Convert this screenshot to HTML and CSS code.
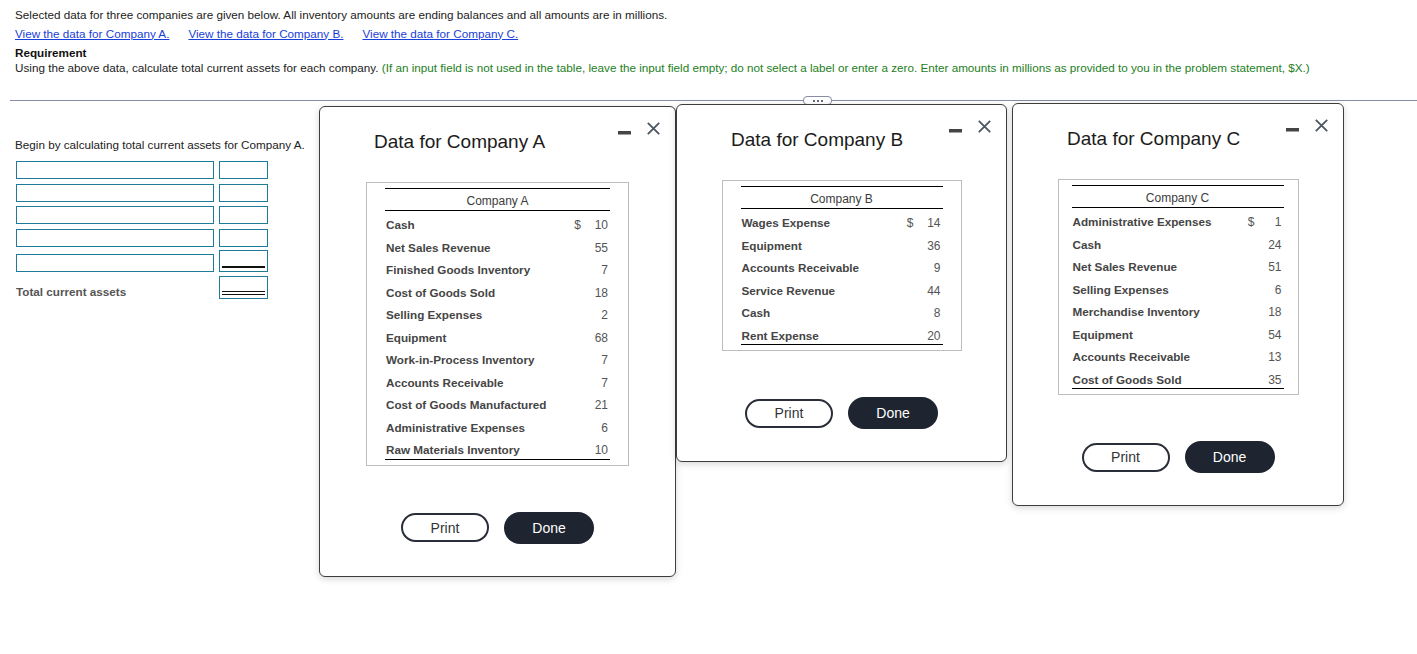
FILE: index.html
```html
<!DOCTYPE html>
<html lang="en">
<head>
<meta charset="utf-8">
<title>Total current assets</title>
<link rel="stylesheet" href="styles.css">
</head>
<body>
<div class="intro">
  <p class="line">Selected data for three companies are given below. All inventory amounts are ending balances and all amounts are in millions.</p>
  <p class="line links"><a href="#" class="link">View the data for Company A.</a><a href="#" class="link">View the data for Company B.</a><a href="#" class="link">View the data for Company C.</a></p>
  <p class="req-title">Requirement</p>
  <p class="req">Using the above data, calculate total current assets for each company. <span class="hint">(If an input field is not used in the table, leave the input field empty; do not select a label or enter a zero. Enter amounts in millions as provided to you in the problem statement, $X.)</span></p>
</div>

<div class="divider">
  <span class="rule rule-left"></span>
  <span class="pill"><i class="dot"></i><i class="dot"></i><i class="dot"></i></span>
  <span class="rule rule-right"></span>
</div>

<div class="work">
  <p class="work-lead">Begin by calculating total current assets for Company A.</p>
  <div class="entry">
    <div class="entry-row"><span class="field field-wide"></span><span class="field field-num"></span></div>
    <div class="entry-row"><span class="field field-wide"></span><span class="field field-num"></span></div>
    <div class="entry-row"><span class="field field-wide"></span><span class="field field-num"></span></div>
    <div class="entry-row"><span class="field field-wide"></span><span class="field field-num"></span></div>
    <div class="entry-row entry-row-last"><span class="field field-wide"></span><span class="field field-num field-sub"><i class="uline"></i></span></div>
    <div class="entry-row entry-row-total"><span class="total-label">Total current assets</span><span class="field field-num field-total"><i class="dline"></i></span></div>
  </div>
</div>

<section class="dialog dialog-a">
  <header class="dlg-head">
    <h2 class="dlg-title">Data for Company A</h2>
    <div class="dlg-controls">
      <svg class="ic" width="13" height="13" viewBox="0 0 13 13"><rect x="0" y="9" width="13" height="3.5" fill="#454545"/></svg>
      <svg class="ic" width="13" height="13" viewBox="0 0 13 13"><path d="M0.8 0.8 L12.2 12.2 M12.2 0.8 L0.8 12.2" stroke="#4d5561" stroke-width="1.8" fill="none"/></svg>
    </div>
  </header>
  <div class="data-box">
    <table class="data data-a">
      <colgroup><col><col class="c-cur"><col class="c-val"></colgroup>
      <thead><tr><th colspan="3">Company A</th></tr></thead>
      <tbody>
        <tr><td class="lbl">Cash</td><td class="cur">$</td><td class="val">10</td></tr>
        <tr><td class="lbl">Net Sales Revenue</td><td class="cur"></td><td class="val">55</td></tr>
        <tr><td class="lbl">Finished Goods Inventory</td><td class="cur"></td><td class="val">7</td></tr>
        <tr><td class="lbl">Cost of Goods Sold</td><td class="cur"></td><td class="val">18</td></tr>
        <tr><td class="lbl">Selling Expenses</td><td class="cur"></td><td class="val">2</td></tr>
        <tr><td class="lbl">Equipment</td><td class="cur"></td><td class="val">68</td></tr>
        <tr><td class="lbl">Work-in-Process Inventory</td><td class="cur"></td><td class="val">7</td></tr>
        <tr><td class="lbl">Accounts Receivable</td><td class="cur"></td><td class="val">7</td></tr>
        <tr><td class="lbl">Cost of Goods Manufactured</td><td class="cur"></td><td class="val">21</td></tr>
        <tr><td class="lbl">Administrative Expenses</td><td class="cur"></td><td class="val">6</td></tr>
        <tr class="last"><td class="lbl">Raw Materials Inventory</td><td class="cur"></td><td class="val">10</td></tr>
      </tbody>
    </table>
  </div>
  <div class="dlg-actions"><button class="btn btn-print">Print</button><button class="btn btn-done">Done</button></div>
</section>

<section class="dialog dialog-b">
  <header class="dlg-head">
    <h2 class="dlg-title">Data for Company B</h2>
    <div class="dlg-controls">
      <svg class="ic" width="13" height="13" viewBox="0 0 13 13"><rect x="0" y="9" width="13" height="3.5" fill="#454545"/></svg>
      <svg class="ic" width="13" height="13" viewBox="0 0 13 13"><path d="M0.8 0.8 L12.2 12.2 M12.2 0.8 L0.8 12.2" stroke="#4d5561" stroke-width="1.8" fill="none"/></svg>
    </div>
  </header>
  <div class="data-box">
    <table class="data data-b">
      <colgroup><col><col class="c-cur"><col class="c-val"></colgroup>
      <thead><tr><th colspan="3">Company B</th></tr></thead>
      <tbody>
        <tr><td class="lbl">Wages Expense</td><td class="cur">$</td><td class="val">14</td></tr>
        <tr><td class="lbl">Equipment</td><td class="cur"></td><td class="val">36</td></tr>
        <tr><td class="lbl">Accounts Receivable</td><td class="cur"></td><td class="val">9</td></tr>
        <tr><td class="lbl">Service Revenue</td><td class="cur"></td><td class="val">44</td></tr>
        <tr><td class="lbl">Cash</td><td class="cur"></td><td class="val">8</td></tr>
        <tr class="last"><td class="lbl">Rent Expense</td><td class="cur"></td><td class="val">20</td></tr>
      </tbody>
    </table>
  </div>
  <div class="dlg-actions"><button class="btn btn-print">Print</button><button class="btn btn-done">Done</button></div>
</section>

<section class="dialog dialog-c">
  <header class="dlg-head">
    <h2 class="dlg-title">Data for Company C</h2>
    <div class="dlg-controls">
      <svg class="ic" width="13" height="13" viewBox="0 0 13 13"><rect x="0" y="9" width="13" height="3.5" fill="#454545"/></svg>
      <svg class="ic" width="13" height="13" viewBox="0 0 13 13"><path d="M0.8 0.8 L12.2 12.2 M12.2 0.8 L0.8 12.2" stroke="#4d5561" stroke-width="1.8" fill="none"/></svg>
    </div>
  </header>
  <div class="data-box data-box-c">
    <table class="data data-c">
      <colgroup><col><col class="c-cur"><col class="c-val"></colgroup>
      <thead><tr><th colspan="3">Company C</th></tr></thead>
      <tbody>
        <tr><td class="lbl">Administrative Expenses</td><td class="cur">$</td><td class="val">1</td></tr>
        <tr><td class="lbl">Cash</td><td class="cur"></td><td class="val">24</td></tr>
        <tr><td class="lbl">Net Sales Revenue</td><td class="cur"></td><td class="val">51</td></tr>
        <tr><td class="lbl">Selling Expenses</td><td class="cur"></td><td class="val">6</td></tr>
        <tr><td class="lbl">Merchandise Inventory</td><td class="cur"></td><td class="val">18</td></tr>
        <tr><td class="lbl">Equipment</td><td class="cur"></td><td class="val">54</td></tr>
        <tr><td class="lbl">Accounts Receivable</td><td class="cur"></td><td class="val">13</td></tr>
        <tr class="last"><td class="lbl">Cost of Goods Sold</td><td class="cur"></td><td class="val">35</td></tr>
      </tbody>
    </table>
  </div>
  <div class="dlg-actions"><button class="btn btn-print">Print</button><button class="btn btn-done">Done</button></div>
</section>
</body>
</html>
```

FILE: styles.css
```css
* { box-sizing: border-box; }

html, body {
  margin: 0;
  padding: 0;
  background: #fff;
}

body {
  position: relative;
  width: 1417px;
  height: 654px;
  overflow: hidden;
  font-family: "Liberation Sans", Arial, sans-serif;
  font-size: 11.7px;
  color: #222;
}

p { margin: 0; }

/* ---------- intro ---------- */
.intro {
  padding: 6px 0 0 15px;
}

.line {
  line-height: 18.5px;
}

.links {
  display: flex;
  gap: 19px;
}

.link {
  color: #1a3ed8;
  text-decoration: underline;
}

.req-title {
  margin-top: 1.5px;
  line-height: 15.5px;
  font-weight: bold;
  color: #111;
}

.req {
  line-height: 15.5px;
}

.hint {
  color: #238023;
}

/* ---------- divider ---------- */
.divider {
  display: flex;
  align-items: center;
  height: 9px;
  margin: 20.5px 0 0 10px;
}

.rule {
  display: block;
  height: 1px;
  background: #878da4;
}

.rule-left { width: 793px; }
.rule-right { flex: 1; }

.pill {
  display: flex;
  align-items: center;
  justify-content: center;
  gap: 2px;
  width: 29px;
  height: 9px;
  border: 1px solid #878da4;
  border-radius: 4px;
  background: #fff;
}

.dot {
  display: block;
  width: 2px;
  height: 2px;
  background: #666c80;
}

/* ---------- work area ---------- */
.work {
  padding: 33px 0 0 15px;
}

.work-lead {
  line-height: 14px;
  color: #222;
}

.entry {
  margin: 9px 0 0 1px;
}

.entry-row {
  display: flex;
  align-items: flex-end;
  gap: 5px;
  margin-top: 4.5px;
}

.entry-row:first-child { margin-top: 0; }

.entry-row-last { margin-top: 3px; }
.entry-row-total { margin-top: 4px; }

.field {
  position: relative;
  display: block;
  height: 18px;
  border: 1px solid #207b98;
  background: #fff;
}

.field-wide { width: 198px; }
.field-num { width: 49px; }

.field-sub { height: 22px; }
.field-total { height: 23px; }

.uline {
  position: absolute;
  left: 2px;
  right: 2px;
  bottom: 3px;
  height: 1.5px;
  background: #111;
}

.dline {
  position: absolute;
  left: 2px;
  right: 2px;
  bottom: 3px;
  height: 4px;
  border-top: 1px solid #111;
  border-bottom: 1px solid #111;
}

.total-label {
  width: 198px;
  line-height: 14px;
  margin-bottom: 0;
  font-weight: bold;
  color: #555;
}

/* ---------- dialogs ---------- */
.dialog {
  position: absolute;
  background: #fff;
  border: 1px solid #3d3d3d;
  border-radius: 6px;
  box-shadow: 0 2px 7px rgba(0, 0, 0, 0.16);
}

.dialog-a { left: 319px; top: 106px; width: 357px; }
.dialog-b { left: 676px; top: 104px; width: 331px; }
.dialog-c { left: 1012px; top: 103px; width: 332px; }

.dlg-head {
  display: flex;
  justify-content: space-between;
  align-items: flex-start;
  padding: 15px 15px 0 54px;
}

.dlg-title {
  margin: 9px 0 0;
  font-size: 19px;
  line-height: 22px;
  font-weight: normal;
  color: #1b1b1b;
}

.dlg-controls {
  display: flex;
  gap: 16px;
}

.ic { display: block; }

.data-box {
  width: fit-content;
  margin: 29px auto 0;
  padding: 5px 18px;
  border: 1px solid #bdbdbd;
}

.data-box-c {
  padding-left: 13px;
  padding-right: 14px;
}

.data {
  border-collapse: separate;
  border-spacing: 0;
  table-layout: fixed;
  font-family: "Liberation Sans", Arial, sans-serif;
}

.data-a { width: 225px; }
.data-b { width: 202px; }
.data-c { width: 212px; }

.c-cur { width: 9px; }
.c-val { width: 29px; }

.data th {
  padding: 4px 0 0;
  line-height: 17px;
  border-top: 1px solid #000;
  border-bottom: 1px solid #000;
  font-size: 12px;
  font-weight: normal;
  color: #3c3c3c;
  text-align: center;
}

.data td {
  padding: 6px 0 0;
  line-height: 16.5px;
  white-space: nowrap;
}

.data tr.last td {
  border-bottom: 1px solid #000;
}

.lbl {
  padding-left: 1px !important;
  font-size: 11.7px;
  font-weight: bold;
  color: #454545;
}

.cur {
  font-size: 12px;
  color: #555;
  text-align: right;
}

.val {
  padding-right: 2px !important;
  font-size: 12px;
  color: #555;
  text-align: right;
}

.dlg-actions {
  display: flex;
  justify-content: center;
  align-items: center;
  gap: 15px;
  margin-top: 46px;
  padding-bottom: 32px;
}

.btn {
  font-family: "Liberation Sans", Arial, sans-serif;
  font-size: 14px;
  padding: 0;
  cursor: pointer;
}

.btn-print {
  width: 88px;
  height: 29px;
  border: 2px solid #2a2e38;
  border-radius: 15px;
  background: #fff;
  color: #333;
}

.btn-done {
  width: 90px;
  height: 32px;
  border: none;
  border-radius: 16px;
  background: #1e2430;
  color: #fff;
}
```
